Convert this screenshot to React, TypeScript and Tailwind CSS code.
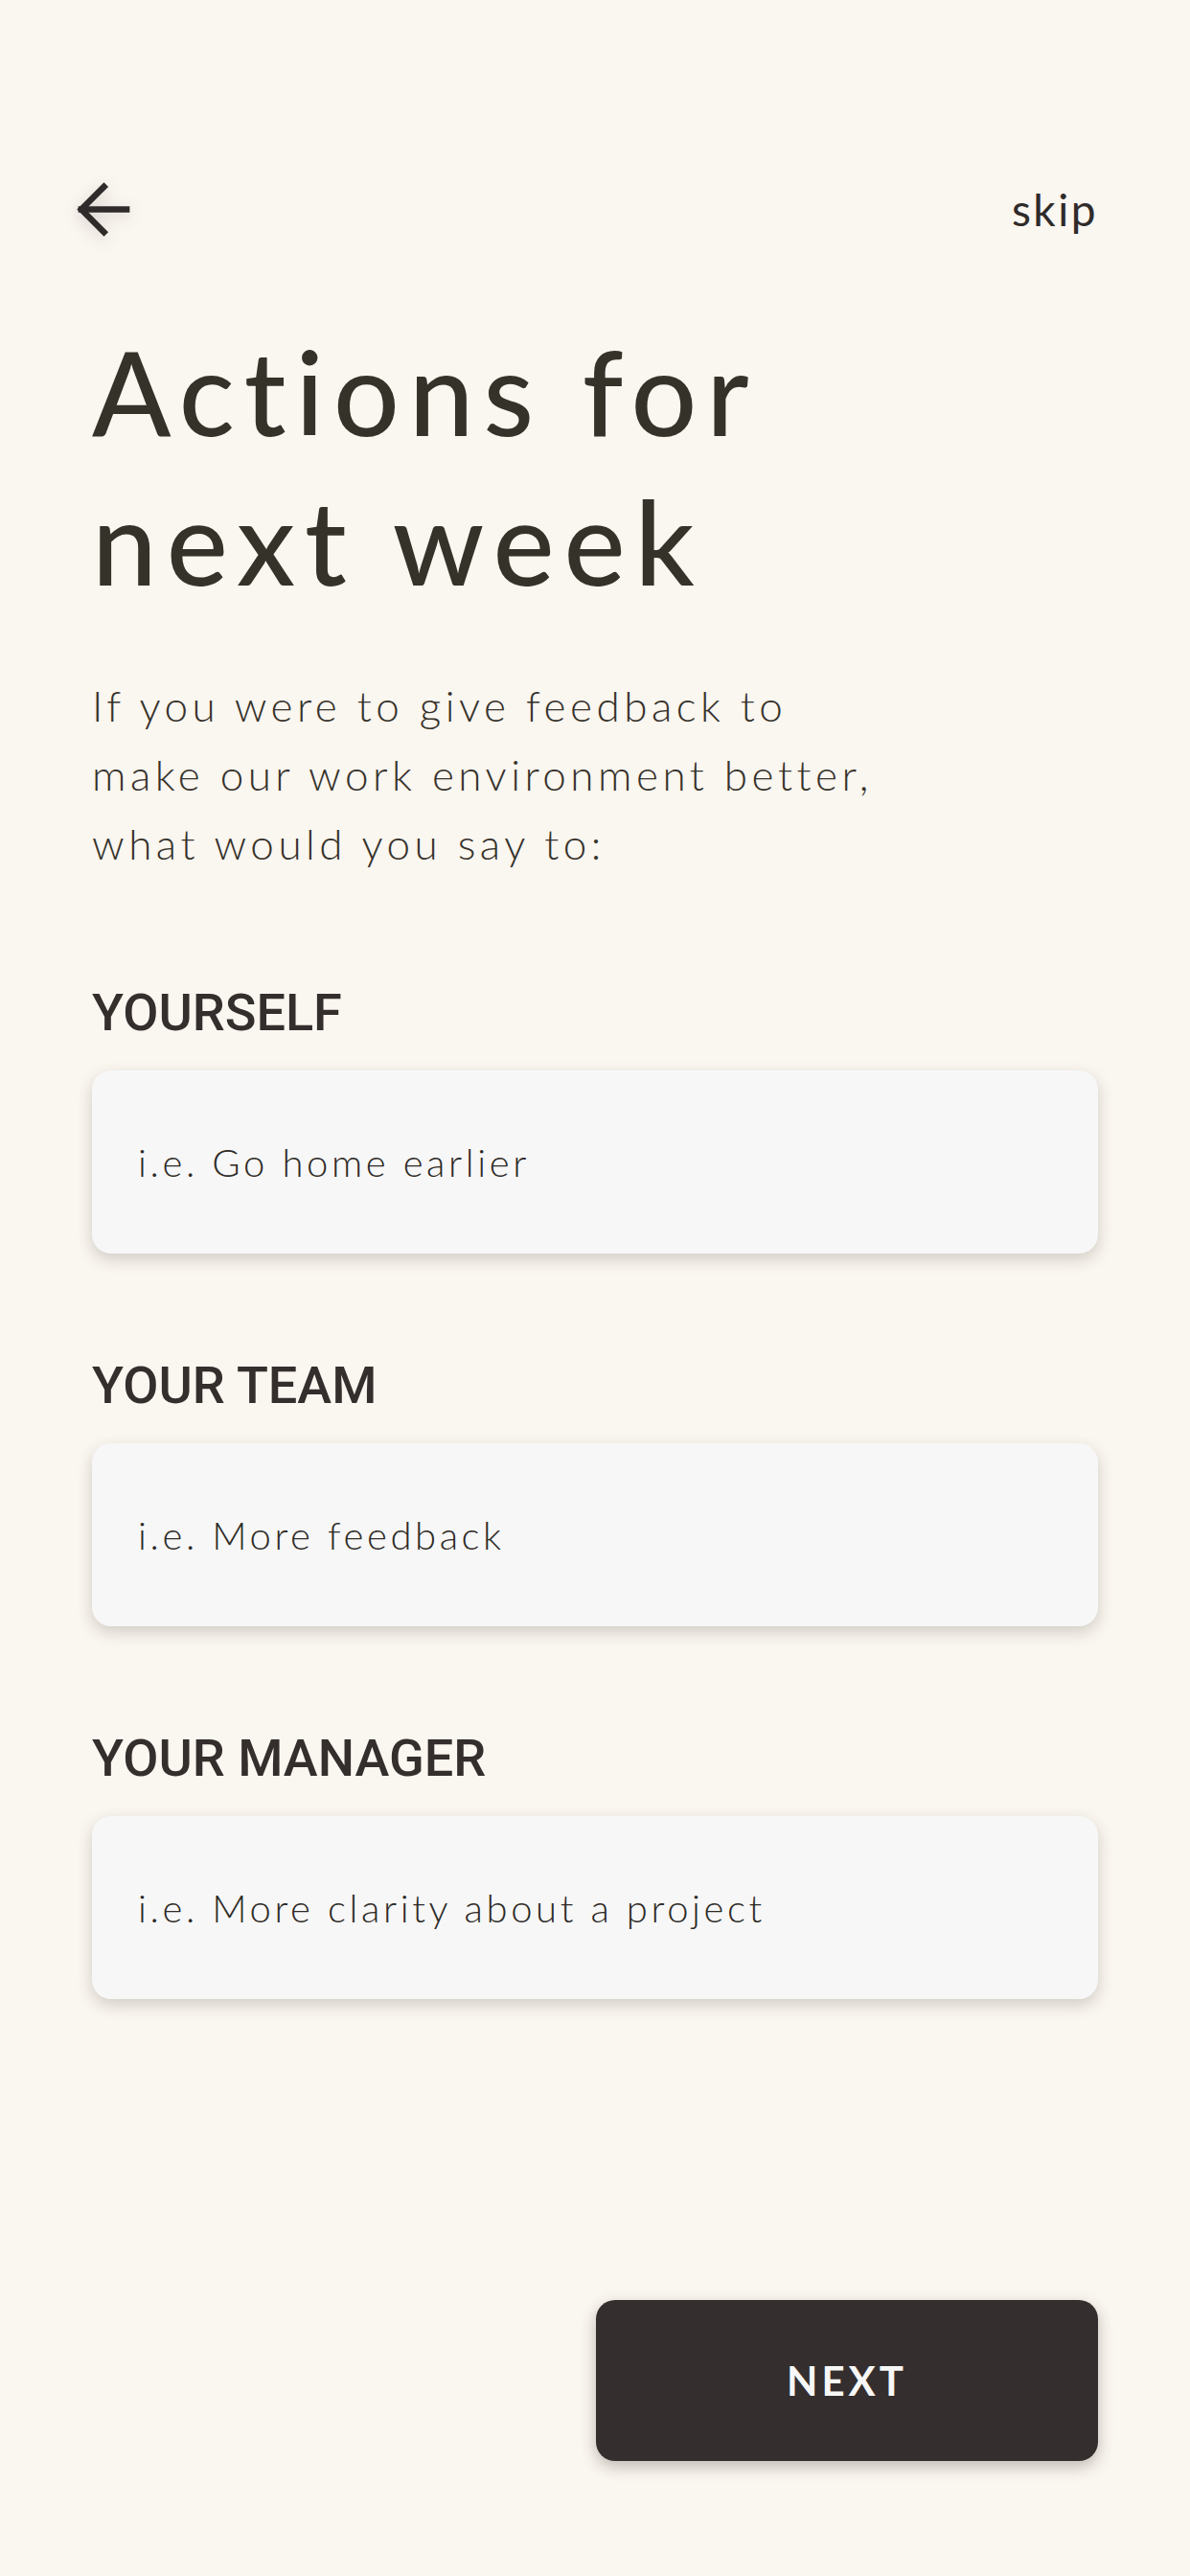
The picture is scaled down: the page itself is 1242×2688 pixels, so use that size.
import { ArrowLeft } from "lucide-react";

const fields = [
    { label: "YOURSELF", placeholder: "i.e. Go home earlier" },
    { label: "YOUR TEAM", placeholder: "i.e. More feedback" },
    { label: "YOUR MANAGER", placeholder: "i.e. More clarity about a project" },
];

function Field({ label, placeholder, first }: { label: string; placeholder: string; first?: boolean }) {
    return (
        <div className={first ? "mt-[114px] flex flex-col" : "mt-[111px] flex flex-col"}>
            <div className="h-[54px] font-['Roboto',sans-serif] text-[54px] font-medium leading-[54px] text-[#342e2d]">
                {label}
            </div>
            <div className="mt-[33px] flex h-[191px] items-center rounded-[20px] bg-[#f7f7f7] px-[48px] shadow-[0_6px_16px_rgba(70,60,45,0.22)]">
                <span className="font-['Lato',sans-serif] text-[40px] font-light tracking-[3.6px] text-[#2e2a26]">
                    {placeholder}
                </span>
            </div>
        </div>
    );
}

export default function App() {
    return (
        <div className="flex min-h-[2688px] w-full flex-col bg-[#faf6f0] px-[96px] pt-[178px]">
            <div className="flex h-[81px] items-center justify-between">
                <button className="-ml-[28px] text-[#2f2b2a] [filter:drop-shadow(0_4px_8px_rgba(60,50,40,0.2))]">
                    <ArrowLeft size={81} strokeWidth={1.9} strokeLinecap="square" strokeLinejoin="miter" />
                </button>
                <span className="font-['Lato',sans-serif] text-[46px] tracking-[2.5px] text-[#2f2b2a]">skip</span>
            </div>

            <h1 className="mt-[72px] font-['Lato',sans-serif] text-[121px] font-medium leading-[156px] tracking-[10px] text-[#35322a]">
                Actions for
                <br />
                next week
            </h1>

            <p className="mt-[57px] font-['Lato',sans-serif] text-[44px] font-light leading-[72px] tracking-[4.5px] text-[#36322b]">
                If you were to give feedback to
                <br />
                make our work environment better,
                <br />
                what would you say to:
            </p>

            {fields.map((f, i) => (
                <Field key={f.label} label={f.label} placeholder={f.placeholder} first={i === 0} />
            ))}

            <div className="mt-[314px] flex justify-end">
                <button className="flex h-[168px] w-[524px] items-center justify-center rounded-[20px] bg-[#342e2e] shadow-[0_6px_16px_rgba(60,50,40,0.3)]">
                    <span className="font-['Lato',sans-serif] text-[42px] font-bold tracking-[4px] text-[#f7f7f7]">NEXT</span>
                </button>
            </div>
        </div>
    );
}
